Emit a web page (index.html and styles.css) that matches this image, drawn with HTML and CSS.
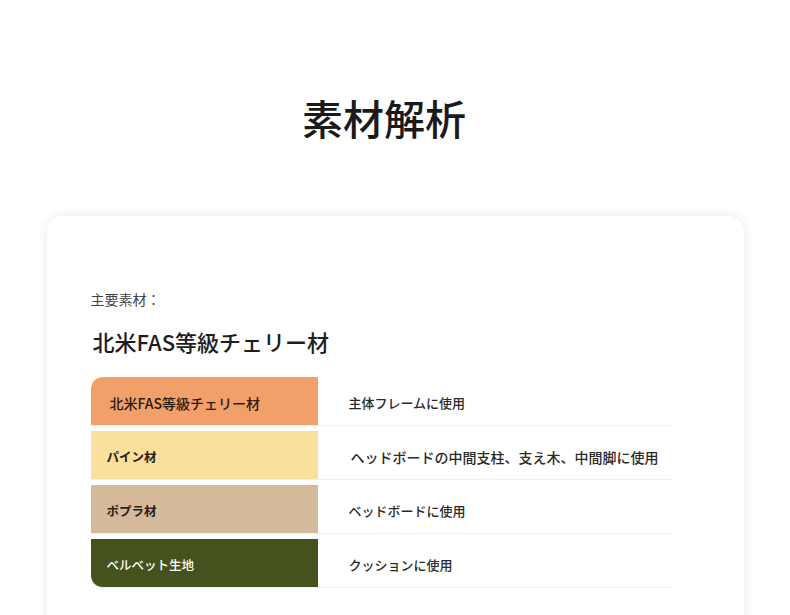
FILE: index.html
```html
<!DOCTYPE html>
<html lang="ja">
<head>
<meta charset="utf-8">
<link rel="stylesheet" href="styles.css">
</head>
<body>
<h1 class="title">素材解析</h1>
<section class="card">
  <p class="label">主要素材：</p>
  <h2 class="main">北米FAS等級チェリー材</h2>
  <table class="mat">
    <tr>
      <td class="name c1 first">北米FAS等級チェリー材</td>
      <td class="use">主体フレームに使用</td>
    </tr>
    <tr>
      <td class="name c2">パイン材</td>
      <td class="use wide">ヘッドボードの中間支柱、支え木、中間脚に使用</td>
    </tr>
    <tr>
      <td class="name c3">ポプラ材</td>
      <td class="use">ベッドボードに使用</td>
    </tr>
    <tr>
      <td class="name c4 last">ベルベット生地</td>
      <td class="use">クッションに使用</td>
    </tr>
  </table>
</section>
</body>
</html>
```
FILE: styles.css
```css
html, body {
  margin: 0;
  padding: 0;
  background: #ffffff;
  font-family: "Noto Sans CJK JP", "Noto Sans", sans-serif;
  color: #222;
}
body {
  padding-top: 86px;
  overflow: hidden;
  height: 615px;
  box-sizing: border-box;
}
.title {
  margin: 0 22px 0 0;
  text-align: center;
  font-size: 41px;
  font-weight: 500;
  line-height: 62px;
  color: #1a1a1a;
}
.card {
  width: 697px;
  margin: 68px auto 0;
  background: #fff;
  border-radius: 16px;
  box-shadow: 0 0 12px rgba(0, 0, 0, 0.09);
  padding: 70px 72px 40px 44px;
  box-sizing: border-box;
  height: 460px;
}
.label {
  margin: 0;
  font-size: 14px;
  line-height: 26px;
  color: #444;
}
.main {
  margin: 14px 0 0 2px;
  font-size: 22px;
  font-weight: 500;
  line-height: 30px;
  color: #1e1e1e;
}
.mat {
  margin-top: 16px;
  width: 581px;
  border-collapse: separate;
  border-spacing: 0 5.5px;
}
.mat td {
  height: 49px;
  padding: 0;
  padding-top: 3px;
  border-bottom: 1px solid #f1f1f1;
  vertical-align: middle;
  box-sizing: border-box;
}
.name {
  width: 227px;
  padding-left: 16px !important;
  font-size: 12.5px;
  font-weight: 600;
  color: #2a2218;
}
.c1 {
  background: #f0a068;
  font-size: 14px;
  font-weight: 500;
  padding-left: 19px !important;
  color: #2b1a10;
}
.c2 { background: #fbdf9d; }
.c3 { background: #d4b99b; }
.c4 { background: #44521e; color: #ffffff; font-weight: 500; }
.first { border-top-left-radius: 12px; }
.last { border-bottom-left-radius: 12px; }
.use {
  padding-left: 31px !important;
  font-size: 13px;
  font-weight: 500;
  color: #2a2a2a;
}
.use.wide {
  font-size: 14px;
  padding-left: 33px !important;
}
```
